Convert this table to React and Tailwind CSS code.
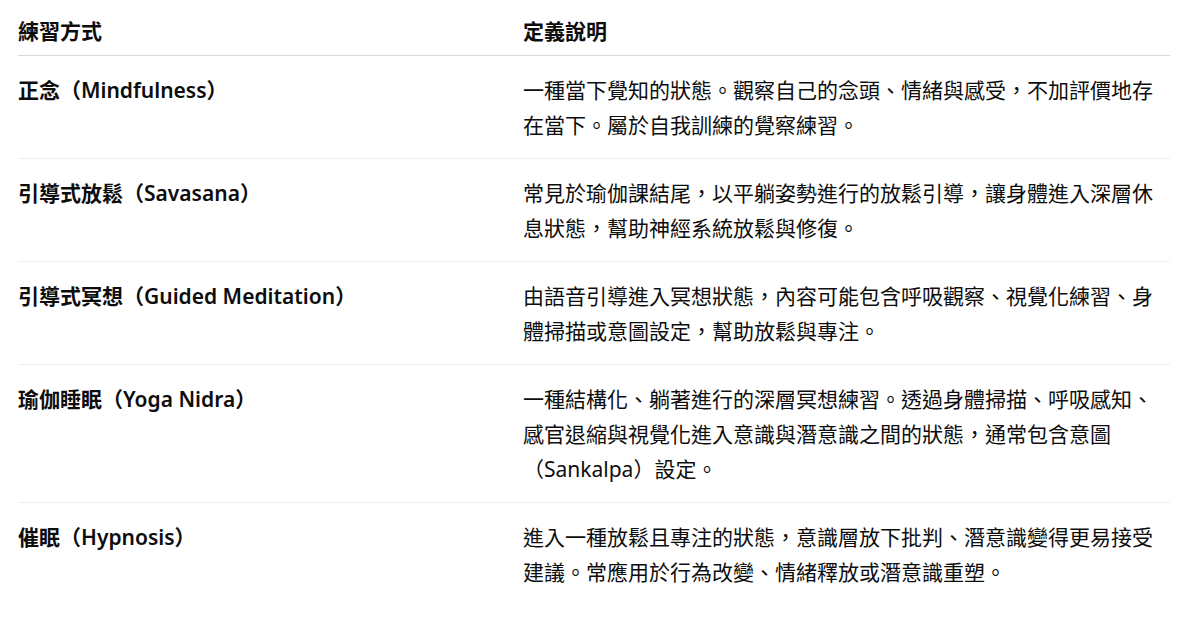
const rows = [
  {
    name: '正念（Mindfulness）',
    desc: '一種當下覺知的狀態。觀察自己的念頭、情緒與感受，不加評價地存在當下。屬於自我訓練的覺察練習。',
  },
  {
    name: '引導式放鬆（Savasana）',
    desc: '常見於瑜伽課結尾，以平躺姿勢進行的放鬆引導，讓身體進入深層休息狀態，幫助神經系統放鬆與修復。',
  },
  {
    name: '引導式冥想（Guided Meditation）',
    desc: '由語音引導進入冥想狀態，內容可能包含呼吸觀察、視覺化練習、身體掃描或意圖設定，幫助放鬆與專注。',
  },
  {
    name: '瑜伽睡眠（Yoga Nidra）',
    desc: '一種結構化、躺著進行的深層冥想練習。透過身體掃描、呼吸感知、感官退縮與視覺化進入意識與潛意識之間的狀態，通常包含意圖（Sankalpa）設定。',
  },
  {
    name: '催眠（Hypnosis）',
    desc: '進入一種放鬆且專注的狀態，意識層放下批判、潛意識變得更易接受建議。常應用於行為改變、情緒釋放或潛意識重塑。',
  },
];

export default function App() {
  return (
    <div
      className="min-h-[619px] bg-white text-[#0d0d0d] pl-[18px]"
      style={{ fontFamily: '"Noto Sans", "Noto Sans CJK TC", sans-serif' }}
    >
      <div className="w-[1152px] text-[21px] leading-[35px]">
        <div className="grid grid-cols-[505px_647px] border-b border-[#d9d9d9] pt-[14px] pb-[6px] font-semibold">
          <div>練習方式</div>
          <div>定義說明</div>
        </div>
        {rows.map((row, i) => (
          <div
            key={row.name}
            className={`grid grid-cols-[505px_647px] pt-[17px] pb-[15px] ${i < rows.length - 1 ? 'border-b border-[#efefef]' : ''}`}
          >
            <div className="font-semibold">{row.name}</div>
            <div>{row.desc}</div>
          </div>
        ))}
      </div>
    </div>
  );
}
